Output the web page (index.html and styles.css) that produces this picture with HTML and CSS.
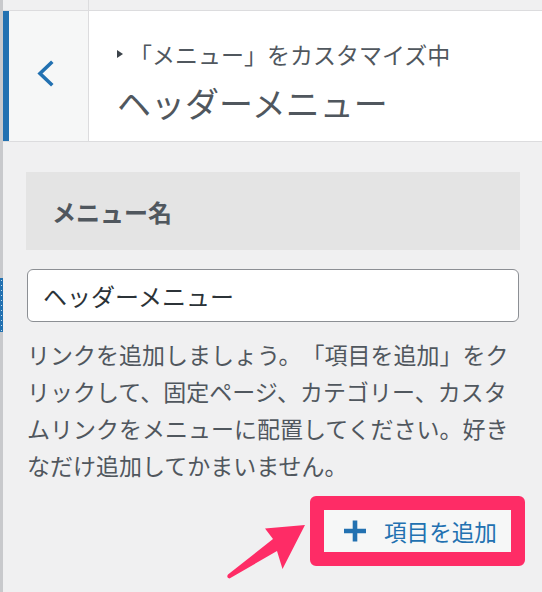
FILE: index.html
```html
<!DOCTYPE html>
<html lang="ja">
<head>
<meta charset="utf-8">
<title>ヘッダーメニュー</title>
<link rel="stylesheet" href="styles.css">
</head>
<body>
<div class="page">
  <div class="edge"><div class="edge-blue"></div></div>
  <div class="main">
    <div class="topstrip"><div class="ts-left"></div></div>
    <div class="header">
      <div class="back">
        <svg class="chev" width="20" height="30" viewBox="0 0 20 30"><polyline points="15,4 4,14.5 15,25" fill="none" stroke="#2271b1" stroke-width="3.6" stroke-linecap="square" stroke-linejoin="miter"/></svg>
      </div>
      <div class="titles">
        <div class="crumb"><span class="tri"></span><span class="crumb-text">「メニュー」をカスタマイズ中</span></div>
        <div class="title">ヘッダーメニュー</div>
      </div>
    </div>
    <div class="content">
      <div class="sec-head">メニュー名</div>
      <div class="field">ヘッダーメニュー</div>
      <p class="desc">リンクを追加しましょう。「項目を追加」をクリックして、固定ページ、カテゴリー、カスタムリンクをメニューに配置してください。好きなだけ追加してかまいません。</p>
      <div class="actions">
        <div class="highlight">
          <div class="add-btn">
            <svg class="plus" width="24" height="24" viewBox="0 0 24 24"><path d="M12 1.5V22.5M1 12H23" stroke="#2271b1" stroke-width="4.6" fill="none"/></svg>
            <span class="add-text">項目を追加</span>
          </div>
        </div>
      </div>
    </div>
  </div>
  <svg class="arrow" width="90" height="64" viewBox="220 520 90 64">
    <path d="M305 525 L265 528.5 L273 539 L228 574.5 Q226 577.5 229.5 578.5 L277 551 L282.5 569 Z" fill="#fe2c66"/>
  </svg>
</div>
</body>
</html>
```
FILE: styles.css
```css
html, body {
  margin: 0;
  padding: 0;
}
body {
  width: 542px;
  height: 592px;
  overflow: hidden;
  background: #f0f0f1;
  font-family: "Noto Sans CJK JP", "Noto Sans", sans-serif;
  color: #50575e;
  text-spacing-trim: space-all;
}
.page {
  position: relative;
  display: flex;
  height: 592px;
}
.edge {
  width: 3px;
  flex: none;
  background: #c8c9cc;
}
.edge-blue {
  margin-top: 278px;
  height: 54px;
  background-color: #2271b1;
  background-image: radial-gradient(circle, rgba(255,255,255,0.75) 0.7px, transparent 1px);
  background-size: 3px 5px;
  background-position: 0 10px;
  background-repeat: repeat-y;
}
.main {
  flex: 1;
  display: flex;
  flex-direction: column;
}
.topstrip {
  height: 10px;
  display: flex;
}
.ts-left {
  width: 85px;
  border-right: 1px solid #dcdcde;
}
.header {
  display: flex;
  height: 130px;
  border-top: 1px solid #dcdcde;
  border-bottom: 1px solid #dcdcde;
  background: #fff;
}
.back {
  flex: none;
  box-sizing: border-box;
  width: 86px;
  border-left: 6px solid #2271b1;
  border-right: 1px solid #dcdcde;
  background: #f6f7f7;
  display: flex;
  align-items: center;
  justify-content: center;
}
.chev {
  margin-top: -5px;
  margin-left: -5px;
}
.titles {
  flex: 1;
  padding-left: 28px;
  padding-top: 28px;
}
.crumb {
  display: flex;
  align-items: center;
  font-size: 23px;
  line-height: 30px;
  color: #50575e;
}
.tri {
  width: 0;
  height: 0;
  border-top: 4px solid transparent;
  border-bottom: 4px solid transparent;
  border-left: 6px solid #3c434a;
  margin-right: 6px;
}
.title {
  margin-top: 13px;
  font-size: 34px;
  line-height: 42px;
  color: #50575e;
}
.content {
  padding: 30px 22px 0 23px;
}
.sec-head {
  height: 78px;
  background: #e4e4e4;
  padding-left: 26px;
  display: flex;
  align-items: center;
  font-size: 24px;
  font-weight: 700;
  color: #50575e;
}
.field {
  margin-top: 19px;
  margin-right: 1px;
  margin-left: 1px;
  height: 51px;
  border: 1px solid #8c8f94;
  border-radius: 6px;
  background: #fff;
  padding-left: 15px;
  display: flex;
  align-items: center;
  font-size: 24px;
  color: #2c3338;
}
.desc {
  margin: 14px 0 0 1px;
  font-size: 23px;
  line-height: 37px;
  color: #50575e;
}
.actions {
  margin-top: 12px;
  margin-right: -5px;
  display: flex;
  justify-content: flex-end;
}
.highlight {
  border: 14px solid #fe2c66;
  border-radius: 6px;
}
.add-btn {
  width: 187px;
  height: 42px;
  box-sizing: border-box;
  background: #f6f7f7;
  display: flex;
  align-items: center;
  padding-left: 19px;
}
.plus {
  flex: none;
}
.add-text {
  margin-left: 17px;
  font-size: 22.6px;
  color: #2271b1;
}
.arrow {
  position: absolute;
  left: 220px;
  top: 520px;
}
```
